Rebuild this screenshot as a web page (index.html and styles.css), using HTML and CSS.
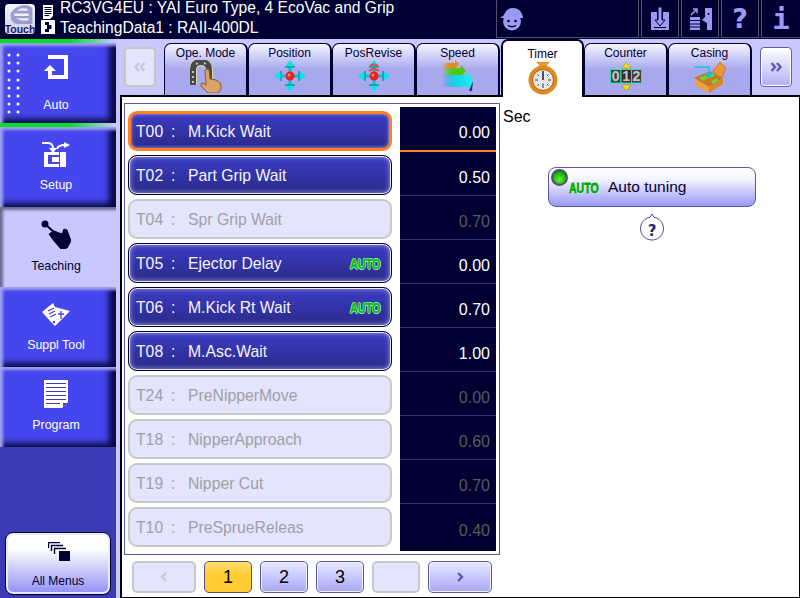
FILE: index.html
```html
<!DOCTYPE html>
<html lang="en">
<head>
  <meta charset="UTF-8">
  <title>Teaching - Timer</title>
  <link rel="stylesheet" href="styles.css">
</head>
<body>
  <div class="screen">

    <!-- Top status bar -->
    <header class="topbar">
      <div class="logo">
        <svg class="logo-e" width="24" height="19" viewBox="0 0 24 20">
          <path d="M4 5Q9 0 17 0Q23 1 24 4V20H8Q1 19 1 11Q1 8 4 5Z" fill="#9c9cd0"/>
          <path d="M19 6H8Q10 4 13 3.500L19 4ZM5 9H20V11.500H5ZM7 14H20V16Q12 17.500 7 14Z" fill="#f0f0fa"/>
        </svg>
        <span class="logo-text">Touch</span>
      </div>
      <div class="file-icons">
        <svg width="10" height="14" viewBox="0 0 10 14">
          <path d="M0 0H10V11L7 14H0Z" fill="#fff"/>
          <path d="M1.500 2.500H8.500M1.500 4.500H8.500M1.500 6.500H8.500M1.500 8.500H8.500M1.500 10.500H6" stroke="#000033" stroke-width="1"/>
        </svg>
        <svg width="14" height="14" viewBox="0 0 14 14">
          <rect width="14" height="14" fill="#fff"/>
          <path d="M4 2H8V5H10.500V9H8V12H4V9H6V5H4Z" fill="#000033"/>
        </svg>
      </div>
      <div class="title">
        <div>RC3VG4EU : YAI Euro Type, 4 EcoVac and Grip</div>
        <div>TeachingData1 : RAII-400DL</div>
      </div>
      <div class="status-box user-box">
        <svg width="24" height="24" viewBox="0 0 24 24">
          <circle cx="12" cy="14.500" r="9" fill="#9a9af0"/>
          <path d="M0 11Q3 9 4 8Q6 1 13 1Q21 1 23 10L23 11Z" fill="#9a9af0"/>
          <circle cx="8.500" cy="14" r="1.300" fill="#000033"/>
          <circle cx="15.500" cy="14" r="1.300" fill="#000033"/>
          <path d="M8 18.500Q12 21 16 18.500" stroke="#000033" stroke-width="1.300" fill="none"/>
        </svg>
      </div>
      <div class="status-box icon-box">
        <svg width="18" height="24" viewBox="0 0 18 24">
          <path d="M0 5H6V15H12V5H18V23H0Z" fill="#9a9af0"/>
          <path d="M7 0H11V13H14L9 19L4 13H7Z" fill="#9a9af0" stroke="#000033" stroke-width="1"/>
          <path d="M3 20.500H15" stroke="#000033" stroke-width="1"/>
        </svg>
      </div>
      <div class="status-box icon-box">
        <svg width="23" height="24" viewBox="0 0 23 24">
          <path d="M2 8L8 2M4 2H8V6" stroke="#9a9af0" stroke-width="1.600" fill="none"/>
          <path d="M1 10H11V23H1Z" fill="#9a9af0"/>
          <path d="M1 13.500H11M1 17H11M1 20H11" stroke="#000033" stroke-width="1"/>
          <path d="M16 1H23V23H18V16L13 13L16 10Z" fill="#9a9af0"/>
          <circle cx="19.500" cy="7" r="1" fill="#000033"/>
        </svg>
      </div>
      <div class="status-box icon-box glyph help-glyph">?</div>
      <div class="status-box icon-box glyph info-glyph">i</div>
    </header>

    <div class="content">

      <!-- Left menu -->
      <nav class="sidebar">
        <div class="strip"></div>
        <a class="side-btn side-btn-auto">
          <svg class="dots" width="14" height="62" viewBox="0 0 14 62">
            <g fill="#fff">
              <circle cx="2" cy="2" r="1.500"/><circle cx="11" cy="2" r="1.500"/>
              <circle cx="2" cy="10" r="1.500"/><circle cx="11" cy="10" r="1.500"/>
              <circle cx="2" cy="18" r="1.500"/><circle cx="11" cy="18" r="1.500"/>
              <circle cx="2" cy="27" r="1.500"/><circle cx="11" cy="27" r="1.500"/>
              <circle cx="2" cy="35" r="1.500"/><circle cx="11" cy="35" r="1.500"/>
              <circle cx="2" cy="43" r="1.500"/><circle cx="11" cy="43" r="1.500"/>
              <circle cx="2" cy="51" r="1.500"/><circle cx="11" cy="51" r="1.500"/>
              <circle cx="2" cy="59" r="1.500"/><circle cx="11" cy="59" r="1.500"/>
            </g>
          </svg>
          <div class="side-icon">
            <svg width="24" height="24" viewBox="0 0 24 24">
              <path d="M4 0H24V24H4V16H8V20H20V4H4Z" fill="#fff"/>
              <path d="M0 16L6 10L12 16Z" fill="#fff"/>
            </svg>
          </div>
          <span>Auto</span>
        </a>
        <div class="strip"></div>
        <a class="side-btn">
          <div class="side-icon">
            <svg width="28" height="25" viewBox="0 0 28 25">
              <path d="M0 1H6Q11 1 11 7" stroke="#fff" stroke-width="2" fill="none"/>
              <path d="M7 6H15L11 11Z" fill="#fff"/>
              <path d="M15 7Q16 3 23 3" stroke="#fff" stroke-width="2" fill="none"/>
              <path d="M22 0L28 3L22 6Z" fill="#fff"/>
              <path d="M2 10H24V25H2Z" fill="#fff"/>
              <path d="M6 13H17V22H6Z" fill="#4646ee"/>
              <path d="M10 15H17V20H10Z" fill="#fff"/>
              <path d="M17 10H18V25H17Z" fill="#4646ee"/>
            </svg>
          </div>
          <span>Setup</span>
        </a>
        <a class="side-btn side-btn-on">
          <div class="side-icon">
            <svg width="30" height="30" viewBox="0 0 30 30">
              <circle cx="4" cy="5" r="3.500" fill="#000033"/>
              <path d="M4 5L15 15" stroke="#000033" stroke-width="2"/>
              <path d="M13 12L21 15L23 10L26 11L30 22L26 29L20 30L13 22L8 15Z" fill="#000033" stroke="#000033" stroke-linejoin="round"/>
            </svg>
          </div>
          <span>Teaching</span>
        </a>
        <a class="side-btn">
          <div class="side-icon">
            <svg width="28" height="24" viewBox="0 0 28 24">
              <path d="M0 10L11 1L13 5L28 9L13 24L9 20Z" fill="#fff"/>
              <path d="M6 9L12 6M7 12L13 9M8 15L14 12M19 9V17M16 12H22" stroke="#4646ee" stroke-width="1.300" fill="none"/>
              <circle cx="12" cy="20" r="1.300" fill="#4646ee"/>
            </svg>
          </div>
          <span>Suppl Tool</span>
        </a>
        <a class="side-btn">
          <div class="side-icon">
            <svg width="24" height="28" viewBox="0 0 24 28">
              <path d="M0 0H24V22L18 28H0Z" fill="#fff"/>
              <path d="M2 3.500H22M2 7.500H22M2 11.500H22M2 15.500H22M2 19.500H22M2 23.500H16" stroke="#3a3ab4" stroke-width="1"/>
              <path d="M19 23H23L19 27Z" fill="#3a3ab4"/>
            </svg>
          </div>
          <span>Program</span>
        </a>
        <a class="all-menus">
          <svg width="22" height="19" viewBox="0 0 22 19">
            <path d="M0.500 6V0.500H12M3.500 9V3.500H15M6.500 12V6.500H18" stroke="#000033" stroke-width="1.400" fill="none"/>
            <rect x="11" y="9" width="11" height="10" fill="#000033"/>
          </svg>
          <span>All Menus</span>
        </a>
      </nav>

      <main class="main">

        <!-- Category tabs -->
        <div class="tabbar">
          <button class="nav-btn nav-btn-off">
            <svg width="12" height="10" viewBox="0 0 12 10"><path d="M5 1L1.500 5L5 9M10.500 1L7 5L10.500 9" fill="none" stroke="#c8c8d8" stroke-width="2.400"/></svg>
          </button>
          <div class="tabs">
            <div class="tab">
              <span>Ope. Mode</span>
              <svg class="tab-icon" width="32" height="33" viewBox="0 0 32 33">
                <path d="M3 25V10Q3 2 11 2Q19 2 19 10V22" fill="none" stroke="#d8d8b0" stroke-width="8"/>
                <path d="M3 25V10Q3 2 11 2Q19 2 19 10V22" fill="none" stroke="#484848" stroke-width="6"/>
                <path d="M3 11V24M6 4L8 3M14 3L16 4" stroke="#c0c0c0" stroke-width="2" stroke-dasharray="2 3"/>
                <path d="M15 10Q17 8 19 10L20 19L26 20Q31 22 31 26V29L28 33H18L11 26Q10 23 13 23L16 25Z" fill="#d8a468" stroke="#8a5a28" stroke-width="1"/>
              </svg>
            </div>
            <div class="tab">
              <span>Position</span>
              <svg class="tab-icon" width="32" height="33" viewBox="0 0 32 33">
                <use href="#cross-arrows"/>
              </svg>
            </div>
            <div class="tab">
              <span>PosRevise</span>
              <svg class="tab-icon" width="32" height="33" viewBox="0 0 32 33">
                <use href="#cross-arrows"/>
                <path d="M11 11Q16 7 21 11M12 6Q16 3 20 6" fill="none" stroke="#e84848" stroke-width="2"/>
              </svg>
            </div>
            <div class="tab">
              <span>Speed</span>
              <svg class="tab-icon" width="32" height="33" viewBox="0 0 32 33">
                <defs>
                  <linearGradient id="fade-o"><stop offset="0" stop-color="#f0a040" stop-opacity=".4"/><stop offset=".35" stop-color="#e08a20"/></linearGradient>
                  <linearGradient id="fade-g"><stop offset="0" stop-color="#60d040" stop-opacity=".3"/><stop offset=".4" stop-color="#50c810"/></linearGradient>
                  <linearGradient id="fade-c"><stop offset="0" stop-color="#30a0e0" stop-opacity=".2"/><stop offset=".35" stop-color="#18d0e8"/><stop offset="1" stop-color="#20f0f0"/></linearGradient>
                </defs>
                <path d="M1 3H13V0L17 4L13 9H1Z" fill="url(#fade-o)"/>
                <path d="M1 8H19V5L24 11L19 16H1Z" fill="url(#fade-g)"/>
                <path d="M1 15H25V10L31 21L27 31V27H1Z" fill="url(#fade-c)"/>
                <path d="M27 31L31 21L30 31Z" fill="#1a3a70"/>
              </svg>
            </div>
            <div class="tab tab-on">
              <span>Timer</span>
              <svg class="tab-icon" width="32" height="33" viewBox="0 0 32 33">
                <path d="M9 0H23L20 3V7H12V3Z" fill="#e89830"/>
                <circle cx="16" cy="18" r="14.500" fill="#e08a20"/>
                <circle cx="16" cy="18" r="10.500" fill="#e8e8e8" stroke="#a86010" stroke-width="1"/>
                <path d="M16 9V18" stroke="#111" stroke-width="1.400"/>
                <path d="M16 21.500V26M8 18H11M21 18H24M10.500 12.500L12 14M21.500 12.500L20 14M10.500 23.500L12 22M21.500 23.500L20 22" stroke="#333" stroke-width="1"/>
              </svg>
            </div>
            <div class="tab">
              <span>Counter</span>
              <svg class="tab-icon" width="32" height="33" viewBox="0 0 32 33">
                <path d="M12 8L16 2.500L21 8Z" fill="#f8e000" stroke="#a09000" stroke-width=".5"/>
                <path d="M12 25H21L16 31Z" fill="#f8e000" stroke="#a09000" stroke-width=".5"/>
                <g stroke="#30e0b0" stroke-width="1">
                  <rect x="0.500" y="9.500" width="10.500" height="13.500" fill="#404040"/>
                  <rect x="11" y="9.500" width="10.500" height="13.500" fill="#303030"/>
                  <rect x="21.500" y="9.500" width="10" height="13.500" fill="#404040"/>
                </g>
                <g class="counter-digits">
                  <text x="5.700" y="21">0</text>
                  <text x="16.200" y="21">1</text>
                  <text x="26.500" y="21">2</text>
                </g>
              </svg>
            </div>
            <div class="tab">
              <span>Casing</span>
              <svg class="tab-icon" width="32" height="33" viewBox="0 0 32 33">
                <path d="M19 11L26 2L32 8L27 19Z" fill="#e89838" stroke="#a86010" stroke-width=".6"/>
                <path d="M0 18L16 11L29 18L15 27Z" fill="#c87820"/>
                <path d="M0 18L15 27V33L2 26Z" fill="#f0a040"/>
                <path d="M15 27L29 18V24L15 33Z" fill="#d88828"/>
                <path d="M5 18L11 15.500L15 18L9 21ZM13 15L18 13L21 15.500L16 18ZM17 21L22 18.500L25 20L19 24Z" fill="#70d040"/>
                <path d="M0 7H15V14" fill="none" stroke="#10c8e8" stroke-width="1.300"/>
                <path d="M10 13H20L15 18Z" fill="#10c8e8"/>
              </svg>
            </div>
          </div>
          <button class="nav-btn">
            <svg width="12" height="10" viewBox="0 0 12 10"><path d="M1.500 1L5 5L1.500 9M7 1L10.500 5L7 9" fill="none" stroke="#5a5ab0" stroke-width="2.400"/></svg>
          </button>
        </div>

        <!-- Timer page -->
        <section class="panel">
          <div class="list-column">
            <div class="timer-box">
              <div class="rows">
                <div class="row row-selected"><span class="code">T00</span><span class="colon">:</span>M.Kick Wait</div>
                <div class="row"><span class="code">T02</span><span class="colon">:</span>Part Grip Wait</div>
                <div class="row row-off"><span class="code">T04</span><span class="colon">:</span>Spr Grip Wait</div>
                <div class="row"><span class="code">T05</span><span class="colon">:</span>Ejector Delay<span class="auto-tag auto-tag-row">AUTO</span></div>
                <div class="row"><span class="code">T06</span><span class="colon">:</span>M.Kick Rt Wait<span class="auto-tag auto-tag-row">AUTO</span></div>
                <div class="row"><span class="code">T08</span><span class="colon">:</span>M.Asc.Wait</div>
                <div class="row row-off"><span class="code">T24</span><span class="colon">:</span>PreNipperMove</div>
                <div class="row row-off"><span class="code">T18</span><span class="colon">:</span>NipperApproach</div>
                <div class="row row-off"><span class="code">T19</span><span class="colon">:</span>Nipper Cut</div>
                <div class="row row-off"><span class="code">T10</span><span class="colon">:</span>PreSprueReleas</div>
              </div>
              <div class="values">
                <div class="value value-selected">0.00</div>
                <div class="value">0.50</div>
                <div class="value value-off">0.70</div>
                <div class="value">0.00</div>
                <div class="value">0.70</div>
                <div class="value">1.00</div>
                <div class="value value-off">0.00</div>
                <div class="value value-off">0.60</div>
                <div class="value value-off">0.70</div>
                <div class="value value-off">0.40</div>
              </div>
            </div>
            <div class="pager">
              <button class="page-btn page-wide page-off">
                <svg width="8" height="10" viewBox="0 0 8 10"><path d="M6 1L2 5L6 9" fill="none" stroke="#c8c8d8" stroke-width="2.400"/></svg>
              </button>
              <button class="page-btn page-on">1</button>
              <button class="page-btn">2</button>
              <button class="page-btn">3</button>
              <button class="page-btn page-off"></button>
              <button class="page-btn page-wide">
                <svg width="8" height="10" viewBox="0 0 8 10"><path d="M2 1L6 5L2 9" fill="none" stroke="#5a5ab0" stroke-width="2.400"/></svg>
              </button>
            </div>
          </div>
          <div class="detail">
            <div class="unit">Sec</div>
            <button class="tuning-btn">
              <span class="led"></span>
              <span class="auto-tag">AUTO</span>
              <span class="tuning-label">Auto tuning</span>
            </button>
            <svg class="help-bubble" width="26" height="29" viewBox="0 0 26 29">
              <path d="M13 1L15 4.200A11.500 11.500 0 1 1 11 4.200Z" fill="#fff" stroke="#4a4a98" stroke-width="1"/>
              <text x="13" y="22.500" class="help-mark">?</text>
            </svg>
          </div>
        </section>
      </main>
    </div>
  </div>

  <!-- Shared icon -->
  <svg class="sprites" width="0" height="0">
    <defs>
      <g id="cross-arrows">
        <path d="M16 5V27M5 16H27" stroke="#00c8d0" stroke-width="3"/>
        <path d="M16 0L21 7H11ZM16 32L11 25H21ZM0 16L7 11V21ZM32 16L25 21V11Z" fill="#00e8e8"/>
        <path d="M11 7H21M11 25H21M7 21V11M25 21V11" stroke="#007a80" stroke-width="1"/>
        <circle cx="16" cy="16" r="4.500" fill="#e82020"/>
        <circle cx="15" cy="15" r="1.500" fill="#ff8080"/>
      </g>
    </defs>
  </svg>
</body>
</html>
```

FILE: styles.css
```css
* {
  box-sizing: border-box;
}
html, body {
  margin: 0;
  padding: 0;
}
body {
  font-family: "Liberation Sans", Arial, sans-serif;
  font-size: 16px;
  overflow: hidden;
}
button {
  font-family: inherit;
  padding: 0;
}
.screen {
  width: 800px;
  height: 598px;
  display: flex;
  flex-direction: column;
  background-color: #c8c8ff;
}
.sprites {
  display: block;
}

/* top bar */
.topbar {
  height: 39px;
  flex: none;
  display: flex;
  background-color: #000033;
  color: #fff;
}
.logo {
  width: 30px;
  height: 30px;
  margin: 4px 0 0 5px;
  border-radius: 4px;
  background: linear-gradient(#f4f4fa, #d0d0e8);
  display: flex;
  flex-direction: column;
  align-items: center;
  overflow: hidden;
}
.logo-e {
  flex: none;
  margin-top: 1px;
  margin-left: 1px;
}
.logo-text {
  font-size: 10.500px;
  font-weight: bold;
  line-height: 10px;
  color: #1a1a70;
}
.file-icons {
  width: 14px;
  margin: 5px 0 0 6px;
  display: flex;
  flex-direction: column;
  align-items: center;
  gap: 1px;
}
.file-icons svg {
  display: block;
}
.title {
  flex: 1;
  padding: 0 0 0 5px;
  font-size: 15.600px;
  line-height: 20px;
  margin-top: -2px;
  white-space: nowrap;
}
.status-box {
  height: 38px;
  border: 1px solid #50506a;
  border-top: none;
  display: flex;
  align-items: center;
  justify-content: center;
  margin-left: 2px;
}
.user-box {
  width: 143px;
  justify-content: flex-start;
  padding-left: 3px;
  margin-right: 0;
}
.icon-box {
  width: 38px;
}
.icon-box:last-child {
  width: 39px;
  border-right: none;
}
.glyph {
  color: #9a9af0;
  font-family: "DejaVu Sans", sans-serif;
  font-weight: bold;
  font-size: 27px;
}
.info-glyph {
  font-family: "DejaVu Sans Mono", monospace;
  font-size: 29px;
}

/* page under the top bar */
.content {
  flex: 1;
  display: flex;
  min-height: 0;
}
.sidebar {
  width: 116px;
  flex: none;
  background-color: #3a3ab4;
  display: flex;
  flex-direction: column;
}
.strip {
  height: 4px;
  flex: none;
  background: linear-gradient(to right, #00e020 60%, #c8c8ff);
}
.side-btn {
  position: relative;
  height: 80px;
  flex: none;
  display: flex;
  flex-direction: column;
  align-items: center;
  padding-right: 4px;
  color: #fff;
  font-size: 12.400px;
  background-color: #4646ee;
  box-shadow: inset 3px 3px 3px #a0a0f0, inset -7px -4px 6px #0a0a40;
}
.side-icon {
  height: 54px;
  flex: none;
  display: flex;
  align-items: center;
  justify-content: center;
}
.side-icon svg {
  display: block;
}
.side-btn span {
  line-height: 14px;
  margin-top: -3px;
}
.side-btn-auto .side-icon {
  height: 48px;
}
.side-btn-auto span {
  margin-top: 7px;
}
.dots {
  position: absolute;
  left: 7px;
  top: 10px;
}
.side-btn-on {
  background-color: #c8c8ff;
  color: #000033;
  box-shadow: inset 3px 3px 3px #6a6a90;
}
.side-btn-on span {
  margin-top: -2px;
}
.all-menus {
  margin: auto 0 3px 5px;
  width: 106px;
  height: 63px;
  flex: none;
  display: flex;
  flex-direction: column;
  align-items: center;
  font-size: 12px;
  color: #000033;
  border: 1px solid #000033;
  border-radius: 8px;
  padding-top: 9px;
  background: linear-gradient(#ffffff 25%, #8f8ff4);
  box-shadow: inset 0 0 0 2px #e8e8ff;
}
.all-menus svg {
  display: block;
  margin-left: 2px;
}
.all-menus span {
  margin-top: 13px;
  line-height: 14px;
}

/* tabs */
.main {
  flex: 1;
  display: flex;
  flex-direction: column;
  min-width: 0;
}
.tabbar {
  height: 56px;
  flex: none;
  display: flex;
  align-items: flex-start;
  padding-left: 8px;
}
.nav-btn {
  width: 32px;
  height: 40px;
  margin-top: 8px;
  flex: none;
  display: flex;
  align-items: center;
  justify-content: center;
  border: 1px solid #6060a8;
  border-radius: 4px;
  background: linear-gradient(#ffffff, #b0b0f8);
  box-shadow: inset 0 0 0 1px #fff;
}
.nav-btn-off {
  border: 2px solid #c8c8c8;
  background: #e4e4fc;
  box-shadow: none;
}
.tabs {
  display: flex;
  margin: 4px 8px 0 8px;
}
.tab {
  position: relative;
  width: 84px;
  height: 52px;
  display: flex;
  flex-direction: column;
  align-items: center;
  color: #000033;
  font-size: 12px;
  line-height: 14px;
  padding-top: 2px;
  border: 2px solid #000033;
  border-width: 1px 2px 0 1px;
  border-radius: 7px 7px 0 0;
  background: linear-gradient(#f4f4ff, #a8a8ee 50%);
}
.tab svg {
  display: block;
  flex: none;
}
.tab-on {
  z-index: 2;
  height: 58px;
  width: 83px;
  margin: -4px 0 0 1px;
  padding-top: 6px;
  border-width: 2px 2px 0 2px;
  background: #fff;
}
.tab-on .tab-icon {
  margin-top: 1px;
  margin-left: 1px;
}
.counter-digits text {
  font-family: "Liberation Sans", sans-serif;
  font-size: 14px;
  font-weight: bold;
  fill: #c8c8c8;
  text-anchor: middle;
}

/* white panel */
.panel {
  flex: 1;
  margin-left: 4px;
  min-height: 0;
  display: flex;
  background-color: #fff;
  border: 2px solid #000;
  border-width: 2px 1px 1px 2px;
  padding: 6px 0 0 2px;
}
.list-column {
  width: 376px;
  flex: none;
}
.timer-box {
  height: 452px;
  border: 1px solid #5a5aa0;
  display: flex;
  padding: 3px;
  gap: 8px;
}
.rows {
  width: 264px;
  flex: none;
  padding-top: 4px;
  display: flex;
  flex-direction: column;
  gap: 4px;
}
.row {
  height: 40px;
  flex: none;
  display: flex;
  align-items: center;
  padding: 2px 10px 0 7px;
  font-size: 15.750px;
  color: #f4f4ff;
  border: 1px solid #000033;
  border-radius: 9px;
  background: linear-gradient(#3c3cc4, #2a2a8a);
  box-shadow: inset 0 0 0 1px #e8e8f8, inset 0 0 4px 2px #8080c8;
}
.code {
  width: 35px;
}
.colon {
  width: 17px;
}
.row-selected {
  border: 3px solid #ff7f27;
  padding-left: 5px;
  padding-top: 2px;
  box-shadow: inset 0 0 3px 1px #8080c8;
}
.row-off {
  color: #a0a0a8;
  border: 2px solid #c8c8c8;
  padding-left: 6px;
  padding-top: 1px;
  background: #e4e4fc;
  box-shadow: none;
}
.values {
  width: 96px;
  flex: none;
  background-color: #000033;
}
.value {
  height: 44px;
  display: flex;
  align-items: flex-end;
  justify-content: flex-end;
  padding: 0 6px 8px 0;
  line-height: 18px;
  color: #fff;
  border-bottom: 1px solid #2e2e80;
}
.value:last-child {
  border-bottom: none;
}
.value-selected {
  height: 45px;
  border-bottom: 2px solid #ff7f27;
}
.value-off {
  color: #5a5a58;
}

/* small AUTO mark, squeezed sideways */
.auto-tag {
  display: inline-block;
  width: 29px;
  font-size: 15px;
  line-height: 12px;
  font-weight: bold;
  white-space: nowrap;
  color: #00a810;
  -webkit-text-stroke: 0.900px #00a810;
  text-shadow: 1px 0 #fff, -1px 0 #fff, 0 1px #fff, 0 -1px #fff;
  transform: scaleX(0.7);
  transform-origin: left center;
}
.auto-tag-row {
  width: 31px;
  margin-left: auto;
  font-size: 15.500px;
  color: #00c020;
  -webkit-text-stroke: 0.900px #00c020;
}

/* pager */
.pager {
  display: flex;
  gap: 8px;
  padding: 6px 0 0 8px;
}
.page-btn {
  width: 48px;
  height: 32px;
  display: flex;
  align-items: center;
  justify-content: center;
  color: #000;
  font-size: 18px;
  border: 1px solid #5a5aa0;
  border-radius: 5px;
  background: linear-gradient(#e8e8ff, #c8c8ff 50%, #a8a8f0);
  box-shadow: inset 0 0 0 1px #f0f0ff;
}
.page-wide {
  width: 64px;
}
.page-off {
  border: 2px solid #c8c8c8;
  background: #e4e4fc;
  box-shadow: none;
}
.page-on {
  border-color: #50507a;
  background: linear-gradient(#ffe070, #ffcc33 40%);
  box-shadow: none;
}

/* right side */
.detail {
  flex: 1;
  padding-left: 3px;
  display: flex;
  flex-direction: column;
}
.unit {
  line-height: 18px;
  margin-top: 5px;
}
.tuning-btn {
  position: relative;
  width: 208px;
  height: 40px;
  margin: 41px 0 0 45px;
  display: flex;
  align-items: center;
  font-size: 15.500px;
  color: #000033;
  border: 1px solid #5a5aa0;
  border-radius: 8px;
  background: linear-gradient(#fff, #f4f4ff 30%, #9898f8);
  padding-left: 20px;
}
.led {
  position: absolute;
  left: 2px;
  top: 1px;
  width: 17px;
  height: 17px;
  border-radius: 50%;
  border: 2px solid #50507a;
  background: radial-gradient(circle at 50% 65%, #60f830, #0a9a00 80%);
}
.tuning-btn .auto-tag {
  margin-top: 1px;
}
.tuning-label {
  margin-left: 10px;
}
.help-bubble {
  display: block;
  margin: 6px 0 0 136px;
}
.help-mark {
  font-family: "DejaVu Sans", sans-serif;
  font-size: 15px;
  font-weight: bold;
  fill: #26267a;
  text-anchor: middle;
}
```
